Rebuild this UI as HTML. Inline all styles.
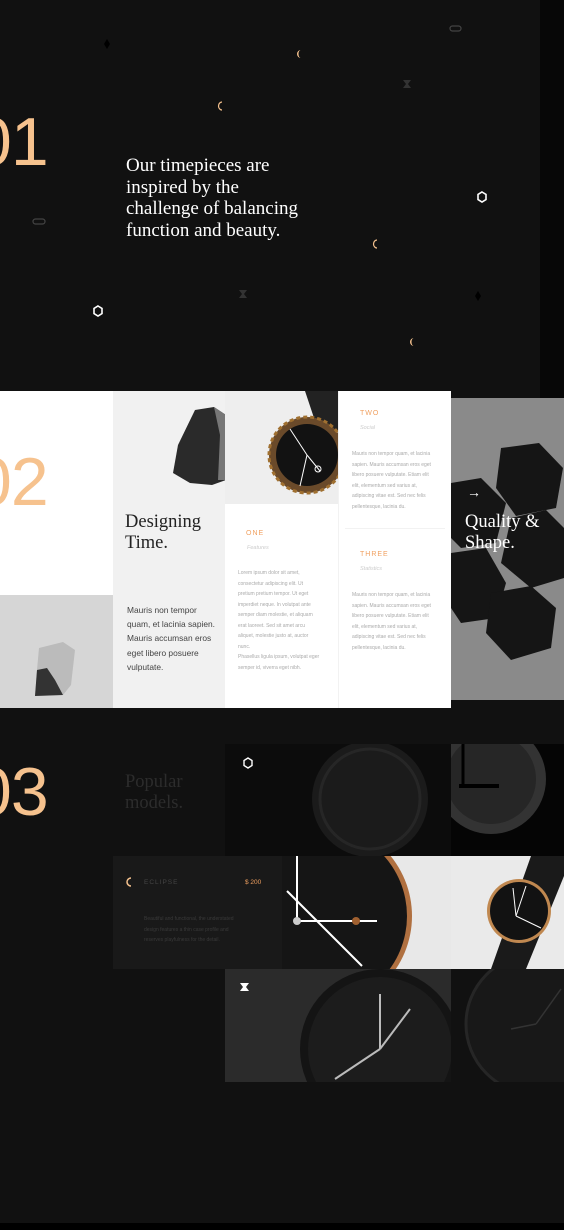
<!DOCTYPE html>
<html><head><meta charset="utf-8"><style>
*{margin:0;padding:0;box-sizing:border-box}
body{width:564px;height:1230px;background:#111;position:relative;overflow:hidden;font-family:"Liberation Sans",sans-serif}
.a{position:absolute}
.num{font-family:"Liberation Sans",sans-serif;font-weight:normal;color:#f6c28e;font-size:68px;letter-spacing:-1px;line-height:1}
.serif{font-family:"Liberation Serif",serif}
.sm{font-size:5px;line-height:10.5px;color:#aaa}
.lab{font-size:7px;letter-spacing:1px;color:#f0a060}
.sub{font-size:5.5px;color:#ccc;font-style:italic}
</style></head><body>
<div class="a" style="left:540px;top:0;width:24px;height:398px;background:#070707"></div>
<div class="a num" style="left:-26px;top:108px">01</div>
<div class="a serif" style="left:126px;top:155px;color:#fff;font-size:19px;line-height:21.5px">Our timepieces are<br>inspired by the<br>challenge of balancing<br>function and beauty.</div>
<svg class="a" style="left:0;top:0" width="564" height="390">
<g fill="none" stroke="#fff" stroke-width="1.6">
<polygon points="482,192 486,194.5 486,199.5 482,202 478,199.5 478,194.5"/>
<polygon points="98,306 102,308.5 102,313.5 98,316 94,313.5 94,308.5"/>
</g>
<g fill="#f6c28e">
<path d="M301,50 a4,4 0 1,0 0,8 a2.5,4 0 0,1 0,-8z"/>
<path d="M414,338 a4,4 0 1,0 0,8 a2.5,4 0 0,1 0,-8z"/>
</g>
<g fill="none" stroke="#f6c28e" stroke-width="1.2">
<path d="M222,102 a3.5,4 0 0,0 0,8"/><path d="M377,240 a3.5,4 0 0,0 0,8"/>
</g>
<g fill="#000"><path d="M107,39 l3,5 -3,5 -3,-5z"/><path d="M478,291 l3,5 -3,5 -3,-5z"/></g>
<g fill="none" stroke="#444" stroke-width="1.2"><rect x="33" y="219" width="12" height="5" rx="2.5"/><rect x="450" y="26" width="11" height="5" rx="2.5"/></g>
<g fill="#333"><path d="M403,80 h8 l-3,4 3,4 h-8 l3,-4z"/><path d="M239,290 h8 l-3,4 3,4 h-8 l3,-4z"/></g>
</svg>
<div class="a" style="left:451px;top:398px;width:113px;height:302px;background:#8a8a8a;overflow:hidden">
<svg width="113" height="302"><g fill="#151515">
<polygon points="50,50 88,45 112,70 105,110 65,118 45,90"/>
<polygon points="0,85 30,80 55,105 45,145 10,150 0,140"/>
<polygon points="60,120 95,112 113,130 113,180 80,190 50,165"/>
<polygon points="0,155 35,150 55,185 45,220 10,225 0,210"/>
<polygon points="40,195 80,188 105,210 100,250 60,262 35,235"/>
</g></svg></div>
<div class="a" style="left:0;top:391px;width:451px;height:317px;background:#fff"></div>
<div class="a" style="left:0;top:595px;width:113px;height:113px;background:#d6d6d6"></div>
<svg class="a" style="left:33px;top:640px" width="45" height="60"><path d="M6,8 L30,2 42,10 38,45 30,55 2,56 4,30z" fill="#bbb"/><path d="M2,56 L4,30 14,28 22,40 30,55z" fill="#333"/></svg>
<div class="a" style="left:113px;top:391px;width:112px;height:317px;background:#f1f1f1"></div>
<svg class="a" style="left:170px;top:405px" width="56" height="90"><path d="M25,5 L44,2 56,10 56,75 42,80 20,78 3,68 8,40z" fill="#2a2a2a"/><path d="M44,2 L56,10 56,75 48,75 50,30z" fill="#777"/></svg>
<div class="a" style="left:225px;top:391px;width:113px;height:113px;background:#eee;overflow:hidden">
<svg width="113" height="113"><path d="M80,0 L113,0 113,40 90,30z" fill="#222"/><circle cx="82" cy="64" r="38" fill="#6a4a2a"/><circle cx="82" cy="64" r="38" fill="none" stroke="#a07030" stroke-width="3" stroke-dasharray="4 3"/><circle cx="82" cy="64" r="31" fill="#121212"/><g stroke="#fff" stroke-width="1"><line x1="82" y1="64" x2="65" y2="38"/><line x1="82" y1="64" x2="95" y2="80"/><line x1="82" y1="64" x2="75" y2="95"/></g><circle cx="93" cy="78" r="3" fill="none" stroke="#fff"/></svg></div>
<div class="a" style="left:338px;top:391px;width:1px;height:317px;background:#f2f2f2"></div>
<div class="a" style="left:345px;top:528px;width:100px;height:1px;background:#f2f2f2"></div>
<div class="a num" style="left:-26px;top:448px">02</div>
<div class="a serif" style="left:125px;top:512px;font-size:18.5px;line-height:21px;color:#222">Designing<br>Time.</div>
<div class="a" style="left:127px;top:603px;font-size:8.4px;line-height:14.2px;color:#444">Mauris non tempor<br>quam, et lacinia sapien.<br>Mauris accumsan eros<br>eget libero posuere<br>vulputate.</div>
<div class="a lab" style="left:246px;top:530px">ONE</div>
<div class="a sub" style="left:247px;top:545px">Features</div>
<div class="a sm" style="left:238px;top:568px">Lorem ipsum dolor sit amet,<br>consectetur adipiscing elit. Ut<br>pretium pretium tempor. Ut eget<br>imperdiet neque. In volutpat ante<br>semper diam molestie, et aliquam<br>erat laoreet. Sed sit amet arcu<br>aliquet, molestie justo at, auctor<br>nunc.<br>Phasellus ligula ipsum, volutpat eger<br>semper id, viverra eget nibh.</div>
<div class="a lab" style="left:360px;top:410px">TWO</div>
<div class="a sub" style="left:360px;top:425px">Social</div>
<div class="a sm" style="left:352px;top:449px">Mauris non tempor quam, et lacinia<br>sapien. Mauris accumsan eros eget<br>libero posuere vulputate. Etiam elit<br>elit, elementum sed varius at,<br>adipiscing vitae est. Sed nec felis<br>pellentesque, lacinia du.</div>
<div class="a lab" style="left:360px;top:551px">THREE</div>
<div class="a sub" style="left:360px;top:566px">Statistics</div>
<div class="a sm" style="left:352px;top:590px">Mauris non tempor quam, et lacinia<br>sapien. Mauris accumsan eros eget<br>libero posuere vulputate. Etiam elit<br>elit, elementum sed varius at,<br>adipiscing vitae est. Sed nec felis<br>pellentesque, lacinia du.</div>
<div class="a" style="left:467px;top:484px;color:#fff;font-size:14px">&rarr;</div>
<div class="a serif" style="left:465px;top:512px;font-size:18.5px;line-height:21px;color:#fff">Quality &amp;<br>Shape.</div>
<div class="a num" style="left:-26px;top:758px">03</div>
<div class="a serif" style="left:125px;top:772px;font-size:18.5px;line-height:21px;color:#2c2c2c">Popular<br>models.</div>
<div class="a" style="left:225px;top:744px;width:226px;height:112px;background:#0c0c0c;overflow:hidden"><svg width="226" height="112"><circle cx="145" cy="55" r="58" fill="#1b1b1b"/><circle cx="145" cy="55" r="50" fill="none" stroke="#262626" stroke-width="3"/><polygon points="23,14 27,16.5 27,21.5 23,24 19,21.5 19,16.5" fill="none" stroke="#fff" stroke-width="1.4"/></svg></div>
<div class="a" style="left:451px;top:744px;width:113px;height:112px;background:#050505;overflow:hidden"><svg width="113" height="112"><circle cx="40" cy="35" r="55" fill="#333"/><circle cx="40" cy="35" r="45" fill="#262626"/><rect x="8" y="40" width="40" height="4" fill="#000"/><line x1="12" y1="0" x2="12" y2="42" stroke="#000" stroke-width="3"/></svg></div>
<div class="a" style="left:113px;top:856px;width:169px;height:113px;background:#191919"></div>
<svg class="a" style="left:125px;top:877px" width="10" height="10"><path d="M6,1 a4,4 0 1,0 0,8" fill="none" stroke="#f6c28e" stroke-width="1.5"/></svg>
<div class="a" style="left:144px;top:879px;font-size:6.5px;letter-spacing:1px;color:#444">ECLIPSE</div>
<div class="a" style="left:245px;top:879px;font-size:6.5px;color:#f0a060">$ 200</div>
<div class="a" style="left:144px;top:914px;font-size:5px;line-height:10.5px;color:#3a3a3a">Beautiful and functional, the understated<br>design features a thin case profile and<br>reserves playfulness for the detail.</div>
<div class="a" style="left:282px;top:856px;width:169px;height:113px;background:#e8e8e8;overflow:hidden"><svg width="169" height="113"><circle cx="35" cy="60" r="95" fill="#b07040"/><circle cx="35" cy="60" r="90" fill="#151515"/><g stroke="#fff" stroke-width="2"><line x1="15" y1="0" x2="15" y2="65"/><line x1="15" y1="65" x2="95" y2="65"/><line x1="5" y1="35" x2="80" y2="110"/></g><circle cx="15" cy="65" r="4" fill="#ccc"/><circle cx="74" cy="65" r="4" fill="#a06030"/></svg></div>
<div class="a" style="left:451px;top:856px;width:113px;height:113px;background:#eaeaea;overflow:hidden"><svg width="113" height="113"><path d="M80,0 L113,0 113,20 75,113 40,113z" fill="#1a1a1a"/><circle cx="68" cy="55" r="32" fill="#c08850"/><circle cx="68" cy="55" r="29" fill="#121212"/><g stroke="#fff" stroke-width="1"><line x1="62" y1="32" x2="65" y2="60"/><line x1="75" y1="30" x2="65" y2="60"/><line x1="65" y1="60" x2="90" y2="72"/></g></svg></div>
<div class="a" style="left:225px;top:969px;width:226px;height:113px;background:#2b2b2b;overflow:hidden"><svg width="226" height="113"><circle cx="155" cy="80" r="80" fill="#141414"/><circle cx="155" cy="80" r="72" fill="#1c1c1c"/><g stroke="#bbb" stroke-width="2"><line x1="155" y1="80" x2="155" y2="25"/><line x1="155" y1="80" x2="110" y2="110"/><line x1="155" y1="80" x2="185" y2="40"/></g><path d="M15,14 h9 l-3,4 3,4 h-9 l3,-4z" fill="#fff"/></svg></div>
<div class="a" style="left:451px;top:969px;width:113px;height:113px;background:#111;overflow:hidden"><svg width="113" height="113"><circle cx="85" cy="55" r="70" fill="#181818" stroke="#262626" stroke-width="3"/><g stroke="#333" stroke-width="1.5"><line x1="85" y1="55" x2="60" y2="60"/><line x1="85" y1="55" x2="110" y2="20"/></g></svg></div>
<div class="a" style="left:0;top:1223px;width:564px;height:7px;background:#000"></div>
</body></html>
